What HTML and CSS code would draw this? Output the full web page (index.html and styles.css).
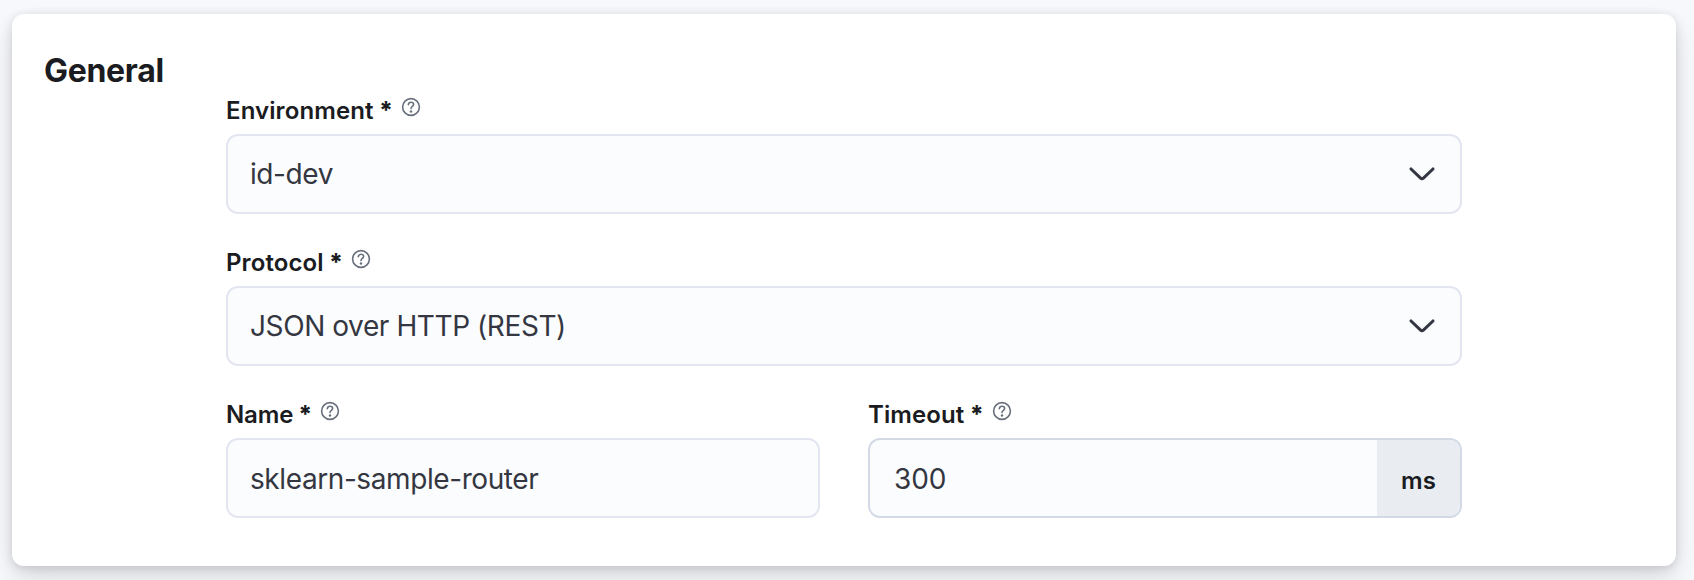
FILE: index.html
```html
<!DOCTYPE html>
<html lang="en">
<head>
<meta charset="utf-8">
<title>General</title>
<link rel="stylesheet" href="styles.css">
</head>
<body>
<svg class="symbols" aria-hidden="true">
  <symbol id="help" viewBox="0 0 20 20">
    <circle cx="10" cy="10" r="8.4"/>
    <path d="M7.3 7.7c.2-1.5 1.2-2.4 2.7-2.4 1.6 0 2.6.9 2.6 2.2 0 1.8-2.6 2-2.6 4.1"/>
    <circle class="dot" cx="10" cy="14.5" r="1.2"/>
  </symbol>
  <symbol id="chevron" viewBox="0 0 28 16">
    <path d="M3 3 12.6 12.1Q14 13.4 15.4 12.1L25 3"/>
  </symbol>
</svg>
<section class="panel">
  <h2 class="title">General</h2>
  <div class="form">
    <div class="field">
      <div class="label"><span>Environment <b class="star">*</b></span><svg class="help"><use href="#help"/></svg></div>
      <div class="control"><span class="value">id-dev</span><svg class="chevron"><use href="#chevron"/></svg></div>
    </div>
    <div class="field">
      <div class="label"><span>Protocol <b class="star">*</b></span><svg class="help"><use href="#help"/></svg></div>
      <div class="control"><span class="value">JSON over HTTP (REST)</span><svg class="chevron"><use href="#chevron"/></svg></div>
    </div>
    <div class="row">
      <div class="field">
        <div class="label short"><span>Name <b class="star">*</b></span><svg class="help"><use href="#help"/></svg></div>
        <div class="control input"><span class="value">sklearn-sample-router</span></div>
      </div>
      <div class="field">
        <div class="label"><span>Timeout <b class="star">*</b></span><svg class="help"><use href="#help"/></svg></div>
        <div class="control input group"><span class="value number">300</span><span class="unit">ms</span></div>
      </div>
    </div>
  </div>
</section>
</body>
</html>
```
FILE: styles.css
```css
* { box-sizing: border-box; }
body {
  margin: 0;
  padding: 14px 18px 14px 12px;
  height: 580px;
  overflow: hidden;
  background: #f7f8fc;
  font-family: Inter, "Liberation Sans", sans-serif;
  color: #1a1c21;
}
.symbols { display: none; }
.panel {
  height: 552px;
  padding: 32px;
  background: #fff;
  border-radius: 12px;
  box-shadow: 0 1.8px 8px rgba(0,0,0,.08), 0 4px 16px rgba(0,0,0,.06), 0 11px 24px rgba(0,0,0,.06), 0 14px 30px rgba(0,0,0,.05);
}
.title {
  margin: 0;
  height: 48px;
  font-size: 32px;
  line-height: 50px;
  font-weight: 700;
  letter-spacing: -0.3px;
}
.form { width: 1236px; margin-left: 182px; }
.field { height: 152px; }
.row { display: grid; grid-template-columns: 1fr 1fr; gap: 48px; }
.label {
  display: flex;
  gap: 8px;
  height: 40px;
  font-size: 24px;
  line-height: 34px;
  font-weight: 600;
  letter-spacing: 0.1px;
}
.short { letter-spacing: -0.15px; }
.star { font-weight: 800; margin-left: -0.8px; }
.help {
  width: 20px;
  height: 20px;
  margin-top: 3px;
  fill: none;
  stroke: #69707d;
  stroke-width: 1.6;
  stroke-linecap: round;
}
.dot { fill: #69707d; stroke: none; }
.control {
  display: flex;
  align-items: center;
  justify-content: space-between;
  height: 80px;
  padding: 0 24px 0 22px;
  border: 2px solid #e3e5f1;
  border-radius: 12px;
  background: #fbfcfe;
}
.value { font-size: 28px; line-height: 40px; letter-spacing: -0.41px; color: #343741; }
.input .value { padding-top: 2px; }
.number { letter-spacing: -0.1px; }
.chevron {
  width: 28px;
  height: 16px;
  fill: none;
  stroke: #343741;
  stroke-width: 3.1;
  stroke-linecap: round;
}
.group { padding: 0 0 0 24px; border-color: #d3dae6; overflow: hidden; }
.unit {
  width: 83px;
  height: 76px;
  background: #e9ecf1;
  font-size: 24px;
  line-height: 82px;
  font-weight: 600;
  text-align: center;
}
```
